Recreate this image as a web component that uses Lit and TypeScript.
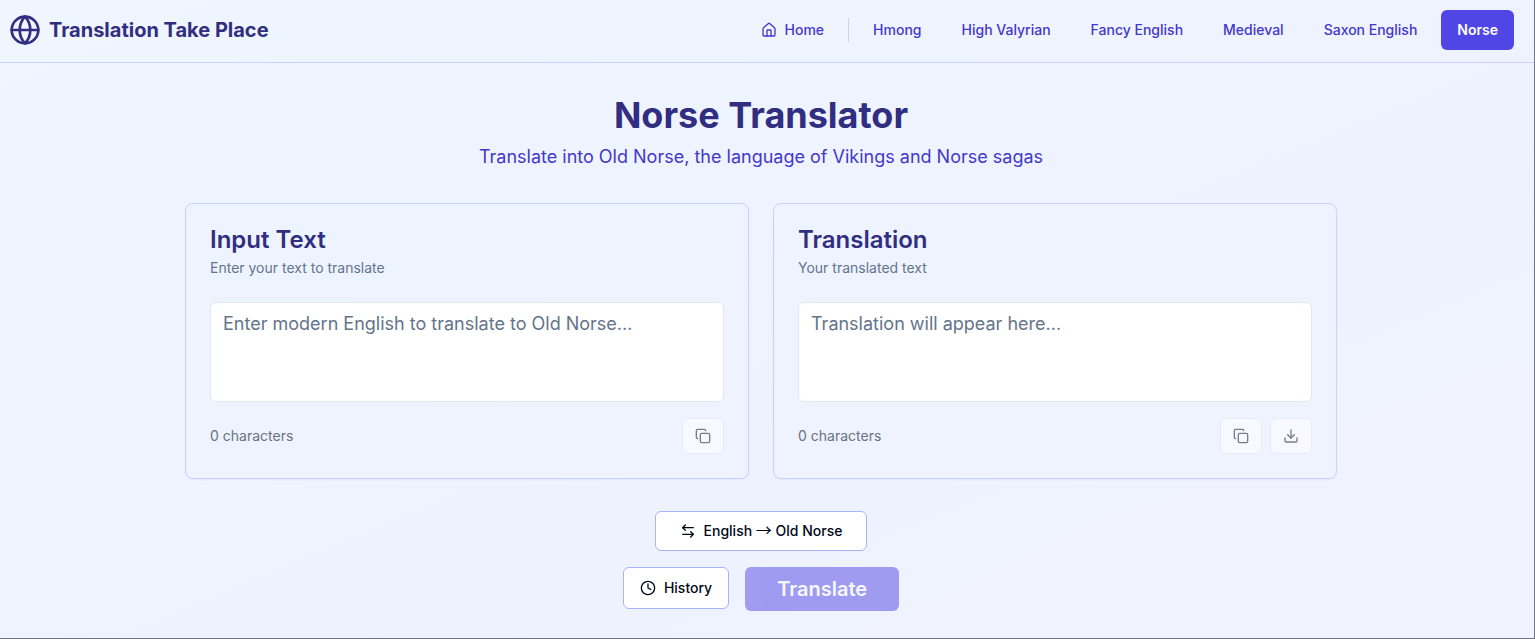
import { LitElement, html, css, svg } from "lit";
import { customElement, property, state } from "lit/decorators.js";
import { classMap } from "lit/directives/class-map.js";

const icons = {
  globe: svg`<circle cx="12" cy="12" r="10"/><path d="M12 2a14.5 14.5 0 0 0 0 20 14.5 14.5 0 0 0 0-20"/><path d="M2 12h20"/>`,
  home: svg`<path d="M15 21v-8a1 1 0 0 0-1-1h-4a1 1 0 0 0-1 1v8"/><path d="M3 10a2 2 0 0 1 .709-1.528l7-5.999a2 2 0 0 1 2.582 0l7 5.999A2 2 0 0 1 21 10v9a2 2 0 0 1-2 2H5a2 2 0 0 1-2-2z"/>`,
  copy: svg`<rect width="14" height="14" x="8" y="8" rx="2" ry="2"/><path d="M4 16c-1.1 0-2-.9-2-2V4c0-1.1.9-2 2-2h10c1.1 0 2 .9 2 2"/>`,
  download: svg`<path d="M21 15v4a2 2 0 0 1-2 2H5a2 2 0 0 1-2-2v-4"/><polyline points="7 10 12 15 17 10"/><line x1="12" x2="12" y1="15" y2="3"/>`,
  swap: svg`<path d="M8 3 4 7l4 4"/><path d="M4 7h16"/><path d="m16 21 4-4-4-4"/><path d="M20 17H4"/>`,
  clock: svg`<circle cx="12" cy="12" r="10"/><polyline points="12 6 12 12 16 14"/>`,
};

type IconName = keyof typeof icons;

@customElement("line-icon")
class LineIcon extends LitElement {
  @property() name: IconName = "globe";

  static styles = css`
    :host {
      display: block;
      flex: none;
      width: 16px;
      height: 16px;
    }
    .glyph {
      display: block;
      width: 100%;
      height: 100%;
      fill: none;
      stroke: currentColor;
      stroke-width: 2;
      stroke-linecap: round;
      stroke-linejoin: round;
    }
  `;

  render() {
    return html`<svg class="glyph" viewBox="0 0 24 24" aria-hidden="true">${icons[this.name]}</svg>`;
  }
}

@customElement("text-panel")
class TextPanel extends LitElement {
  @property() heading = "";
  @property() hint = "";
  @property() placeholder = "";
  @property() value = "";
  @property({ type: Boolean }) output = false;

  static styles = css`
    :host {
      display: block;
    }
    .card {
      box-sizing: border-box;
      padding: 24px;
      border: 1px solid #c7d2fe;
      border-radius: 8px;
      background: rgb(238 244 255 / 0.5);
      box-shadow: 0 1px 2px rgb(0 0 0 / 0.05);
    }
    .heading {
      display: block;
      color: #312e81;
      font-size: 24px;
      line-height: 24px;
      font-weight: 600;
    }
    .hint {
      margin: 6px 0 24px;
      color: #64748b;
      font-size: 14px;
      line-height: 20px;
    }
    .box {
      display: block;
      box-sizing: border-box;
      width: 100%;
      height: 100px;
      padding: 8px 12px;
      border: 1px solid #e2e8f0;
      border-radius: 6px;
      background: #fff;
      color: #0f172a;
      font-family: inherit;
      font-size: 18px;
      line-height: 26px;
      resize: none;
    }
    .box::placeholder {
      color: #64748b;
      opacity: 1;
    }
    .foot {
      display: flex;
      align-items: center;
      justify-content: space-between;
      margin-top: 16px;
    }
    .count {
      color: #6b7280;
      font-size: 14px;
      line-height: 20px;
    }
    .tools {
      display: flex;
      gap: 8px;
    }
    .tool {
      display: flex;
      align-items: center;
      padding: 9px 12px;
      border: 1px solid #e2e8f0;
      border-radius: 6px;
      background: #fff;
      color: #020817;
    }
    .tool:disabled {
      opacity: 0.5;
    }
  `;

  private onInput(e: Event) {
    this.value = (e.target as HTMLTextAreaElement).value;
    this.dispatchEvent(new CustomEvent("text-change", { detail: this.value }));
  }

  render() {
    const empty = !this.value;
    return html`
      <section class="card">
        <label class="heading" for="text">${this.heading}</label>
        <p class="hint">${this.hint}</p>
        <textarea
          class="box"
          id="text"
          placeholder=${this.placeholder}
          ?readonly=${this.output}
          .value=${this.value}
          @input=${this.onInput}
        ></textarea>
        <div class="foot">
          <span class="count">${this.value.length} characters</span>
          <div class="tools">
            <button class="tool" aria-label="Copy" ?disabled=${empty}><line-icon name="copy"></line-icon></button>
            ${this.output
              ? html`<button class="tool" aria-label="Download" ?disabled=${empty}>
                  <line-icon name="download"></line-icon>
                </button>`
              : null}
          </div>
        </div>
      </section>
    `;
  }
}

const languages = ["Hmong", "High Valyrian", "Fancy English", "Medieval", "Saxon English", "Norse"];

@customElement("app-root")
class AppRoot extends LitElement {
  @state() private text = "";
  @state() private reversed = false;

  static styles = css`
    :host {
      display: block;
      box-sizing: border-box;
      min-height: 100vh;
      border-right: 1px solid #71757f;
      border-bottom: 1px solid #71757f;
      background: linear-gradient(to bottom right, #eff6ff, #eef2ff 65%, #f2f2ff);
      font-family: Inter, "Liberation Sans", sans-serif;
    }
    .bar {
      display: flex;
      align-items: center;
      justify-content: space-between;
      padding: 10px 20px 12px 9px;
      border-bottom: 1px solid #c7d2fe;
    }
    .brand {
      display: flex;
      align-items: center;
      gap: 8px;
      color: #312e81;
      font-size: 20px;
      line-height: 28px;
      font-weight: 700;
      text-decoration: none;
    }
    .logo {
      width: 32px;
      height: 32px;
    }
    .menu {
      display: flex;
      align-items: center;
      gap: 8px;
    }
    .link {
      display: flex;
      align-items: center;
      gap: 8px;
      padding: 10px 16px;
      border-radius: 6px;
      color: #4338ca;
      font-size: 14px;
      line-height: 20px;
      font-weight: 500;
      text-decoration: none;
      white-space: nowrap;
    }
    .current {
      background: #4f46e5;
      color: #fff;
      font-weight: 600;
    }
    .rule {
      width: 1px;
      height: 24px;
      background: #c7d2fe;
    }
    .page {
      max-width: 1152px;
      margin: 0 auto;
      padding: 32px 12px 27px 0;
    }
    .title {
      margin: 0;
      color: #312e81;
      font-size: 36px;
      line-height: 40px;
      font-weight: 700;
      text-align: center;
    }
    .lead {
      margin: 8px 0 32px;
      color: #4338ca;
      font-size: 18px;
      line-height: 28px;
      text-align: center;
    }
    .panels {
      display: grid;
      grid-template-columns: repeat(auto-fit, minmax(320px, 1fr));
      gap: 24px;
    }
    .actions {
      display: flex;
      flex-direction: column;
      align-items: center;
      gap: 16px;
      margin-top: 32px;
    }
    .row {
      display: flex;
      align-items: flex-start;
      gap: 16px;
    }
    .button {
      display: flex;
      align-items: center;
      gap: 8px;
      border: 1px solid #a5b4fc;
      border-radius: 6px;
      background: #fff;
      color: #020817;
      font-family: inherit;
      font-size: 14px;
      line-height: 20px;
      font-weight: 500;
    }
    .swap {
      padding: 9px 24px;
    }
    .arrow {
      font-family: "Noto Sans CJK SC", sans-serif;
      font-size: 16px;
      line-height: 1;
      font-weight: 400;
    }
    .history {
      padding: 10px 16px;
    }
    .go {
      padding: 8px 32px;
      border: 0;
      background: #4f46e5;
      color: #fff;
      font-size: 20px;
      line-height: 28px;
      font-weight: 600;
    }
    .go:disabled {
      opacity: 0.5;
    }
  `;

  render() {
    const [from, to] = this.reversed ? ["Old Norse", "English"] : ["English", "Old Norse"];
    return html`
      <header class="bar">
        <a class="brand" href="#"><line-icon class="logo" name="globe"></line-icon>Translation Take Place</a>
        <nav class="menu">
          <a class="link" href="#"><line-icon name="home"></line-icon>Home</a>
          <span class="rule"></span>
          ${languages.map(
            (name) => html`<a class=${classMap({ link: true, current: name === "Norse" })} href="#">${name}</a>`
          )}
        </nav>
      </header>
      <main class="page">
        <h1 class="title">Norse Translator</h1>
        <p class="lead">Translate into Old Norse, the language of Vikings and Norse sagas</p>
        <div class="panels">
          <text-panel
            heading="Input Text"
            hint="Enter your text to translate"
            placeholder="Enter modern English to translate to Old Norse..."
            @text-change=${(e: CustomEvent) => (this.text = e.detail)}
          ></text-panel>
          <text-panel
            output
            heading="Translation"
            hint="Your translated text"
            placeholder="Translation will appear here..."
          ></text-panel>
        </div>
        <div class="actions">
          <button class="button swap" @click=${() => (this.reversed = !this.reversed)}>
            <line-icon name="swap"></line-icon>
            <span>${from} <span class="arrow">→</span> ${to}</span>
          </button>
          <div class="row">
            <button class="button history"><line-icon name="clock"></line-icon>History</button>
            <button class="button go" ?disabled=${!this.text}>Translate</button>
          </div>
        </div>
      </main>
    `;
  }
}
